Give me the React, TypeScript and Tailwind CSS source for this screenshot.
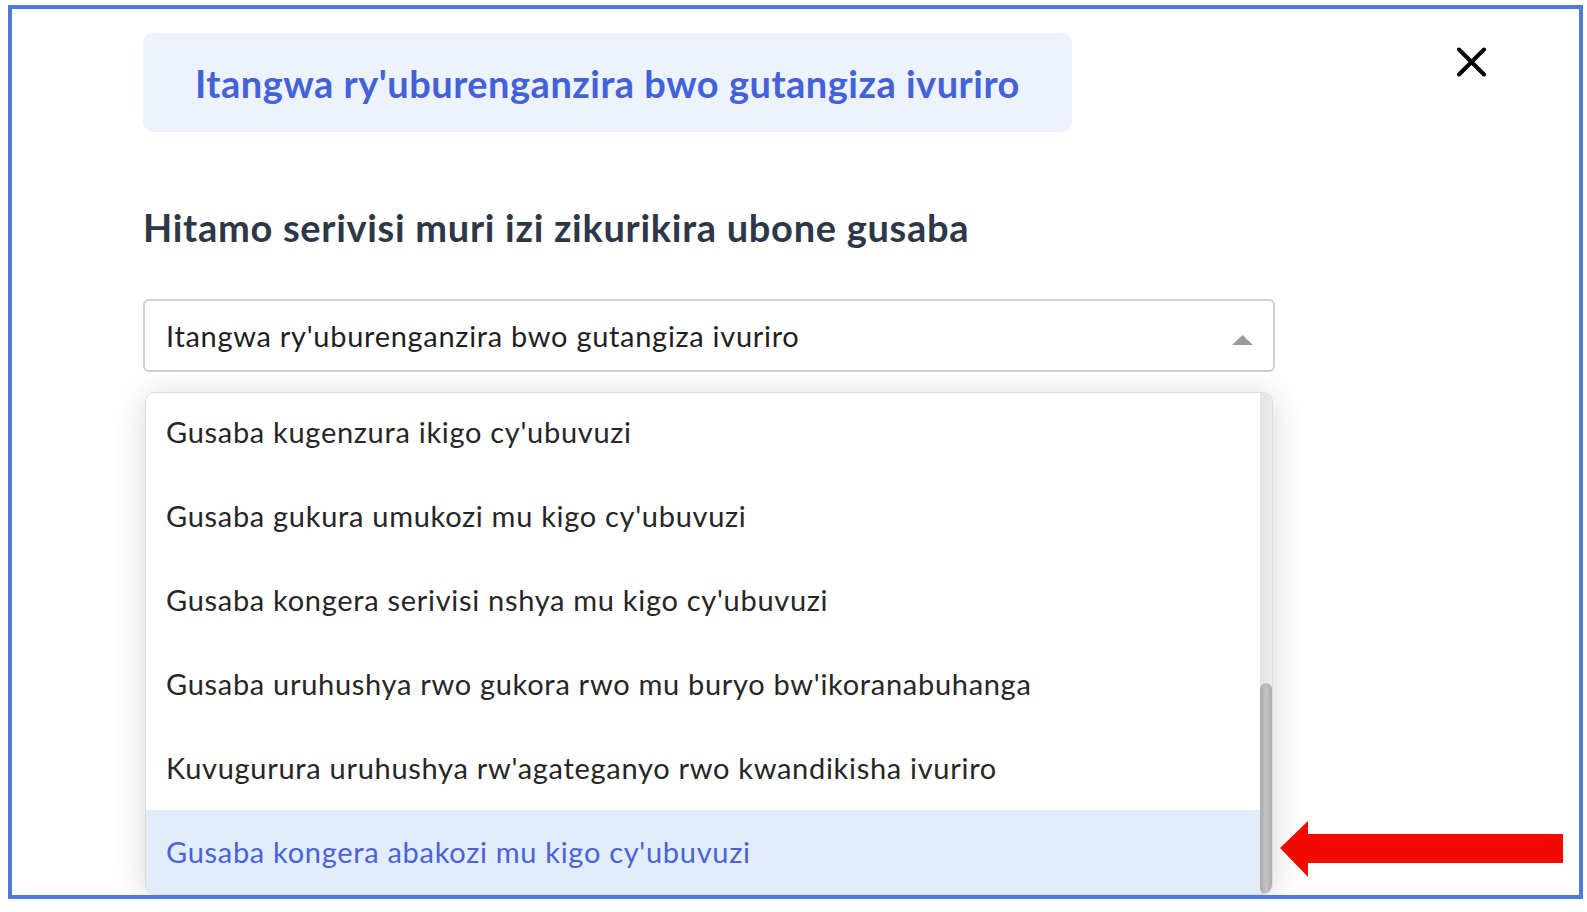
const options = [
  "Gusaba kugenzura ikigo cy'ubuvuzi",
  "Gusaba gukura umukozi mu kigo cy'ubuvuzi",
  "Gusaba kongera serivisi nshya mu kigo cy'ubuvuzi",
  "Gusaba uruhushya rwo gukora rwo mu buryo bw'ikoranabuhanga",
  "Kuvugurura uruhushya rw'agateganyo rwo kwandikisha ivuriro",
  "Gusaba kongera abakozi mu kigo cy'ubuvuzi",
];

export default function App() {
  const selected = options.length - 1;

  return (
    <div className="w-[1587px] h-[912px] bg-white pl-[8px] pt-[5px] font-['Lato',sans-serif]">
      <div className="relative w-[1575px] h-[894px] border-4 border-[#5079dd] overflow-hidden pl-[131px] pr-[92px] pt-[24px] flex flex-col">
        {/* Header: service title + close */}
        <div className="flex items-start">
          <div className="w-[929px] h-[99px] rounded-[10px] bg-[#eef2fc] flex items-center justify-center">
            <h1 className="text-[38px] tracking-[0.5px] font-bold text-[#4361d8] leading-none">
              Itangwa ry'uburenganzira bwo gutangiza ivuriro
            </h1>
          </div>
          <button className="ml-auto mt-[14px] w-[31px] h-[30px]" aria-label="Close">
            <svg viewBox="0 0 31 30" className="w-[31px] h-[30px]">
              <path d="M3 2.5 L28 27.5 M28 2.5 L3 27.5" stroke="#000" strokeWidth="4" strokeLinecap="round" fill="none" />
            </svg>
          </button>
        </div>

        <h2 className="mt-[73px] text-[38px] tracking-[0.7px] font-bold text-[#2d3748] leading-[44px]">
          Hitamo serivisi muri izi zikurikira ubone gusaba
        </h2>

        {/* Select */}
        <div className="mt-[50px] w-[1132px] h-[73px] border-2 border-[#cfcfcf] rounded-[6px] flex items-center pl-[21px] pr-[20px]">
          <span className="text-[29px] tracking-[0.7px] text-[#1f1f1f]">Itangwa ry'uburenganzira bwo gutangiza ivuriro</span>
          <svg viewBox="0 0 21 10" className="ml-auto w-[21px] h-[10px] mt-[8px]">
            <path d="M0 10 L10.5 0 L21 10 Z" fill="#9a9a9a" />
          </svg>
        </div>

        {/* Dropdown list */}
        <div className="mt-[20px] ml-[2px] w-[1128px] h-[503px] shrink-0 rounded-[10px] border border-[#dcdcdc] bg-white shadow-[0_4px_32px_rgba(0,0,0,0.16)] overflow-hidden flex">
          <ul className="flex-1 -mt-[3px]">
            {options.map((o, i) => (
              <li
                key={o}
                className={
                  i === selected
                    ? "h-[84px] flex items-center pl-[20px] text-[29px] tracking-[0.7px] text-[#4a62d8] bg-[#e2ecfa]"
                    : "h-[84px] flex items-center pl-[20px] text-[29px] tracking-[0.7px] text-[#262626]"
                }
              >
                {o}
              </li>
            ))}
            <li className="h-[6px] bg-[#e2ecfa]" />
          </ul>
          <div className="w-[12px] bg-gradient-to-r from-[#e4e4e4] to-[#ececec] flex flex-col justify-end">
            <div className="h-[211px] rounded-full bg-gradient-to-r from-[#a9a9a9] via-[#c2c2c2] to-[#adadad]" />
          </div>
        </div>

        {/* Annotation arrow */}
        <svg
          viewBox="0 0 283 56"
          className="absolute left-[1268px] top-[812px] w-[283px] h-[56px]"
        >
          <path d="M0 27 L28 0 L28 13 L283 13 L283 42 L28 42 L28 56 Z" fill="#f20a00" />
        </svg>
      </div>
    </div>
  );
}
